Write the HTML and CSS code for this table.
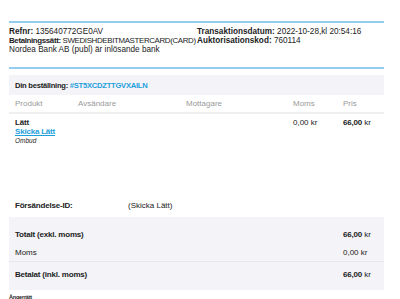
FILE: index.html
```html
<!DOCTYPE html>
<html lang="sv">
<head>
<meta charset="utf-8">
<link rel="stylesheet" href="styles.css">
</head>
<body>
<div class="receipt">
  <div class="info">
    <div class="info-col">
      <div><b>Refnr:</b> 135640772GE0AV</div>
      <div class="tight"><b>Betalningssätt:</b> SWEDISHDEBITMASTERCARD(CARD)</div>
      <div>Nordea Bank AB (publ) är inlösande bank</div>
    </div>
    <div class="info-col">
      <div><b>Transaktionsdatum:</b> 2022-10-28,kl 20:54:16</div>
      <div><b>Auktorisationskod:</b> 760114</div>
    </div>
  </div>
  <div class="order">
    <div class="order-head"><b>Din beställning: <span class="ordno">#ST5XCDZTTGVXAILN</span></b></div>
    <div class="grid cols">
      <div>Produkt</div><div>Avsändare</div><div>Mottagare</div><div>Moms</div><div>Pris</div>
    </div>
    <div class="grid item">
      <div class="prod">
        <b>Lätt</b>
        <a class="link" href="#">Skicka Lätt</a>
        <i class="sub">Ombud</i>
      </div>
      <div></div><div></div><div>0,00 kr</div><div><b>66,00</b> kr</div>
    </div>
    <div class="ship">
      <b class="ship-label">Försändelse-ID:</b><span>(Skicka Lätt)</span>
    </div>
    <div class="totals">
      <div class="trow t1"><b>Totalt (exkl. moms)</b><span><b>66,00</b> kr</span></div>
      <div class="trow t2"><span>Moms</span><span>0,00 kr</span></div>
      <div class="trow t3"><b>Betalat (inkl. moms)</b><span><b>66,00</b> kr</span></div>
    </div>
    <div class="foot"><b>Ångerrätt</b></div>
  </div>
</div>
</body>
</html>
```
FILE: styles.css
```css
html, body { margin: 0; padding: 0; background: #fff; }
body {
  font-family: "Liberation Sans", Arial, Helvetica, sans-serif;
  font-size: 8px;
  color: #222;
}
.receipt {
  width: 375px;
  margin-left: 9px;
  padding-top: 21px;
}
.info {
  border-top: 2px solid #95cdee;
  border-bottom: 2px solid #95cdee;
  display: flex;
  padding: 4px 0 13px 0;
  line-height: 9px;
  font-size: 8.2px;
  white-space: nowrap;
}
.info-col:first-child { width: 188px; }
.tight { font-size: 7.9px; letter-spacing: -0.35px; }
.order { padding-top: 6px; }
.order b { letter-spacing: -0.2px; }
.order-head {
  background: #f4f4f8;
  height: 20px;
  line-height: 22px;
  padding-left: 6px;
  font-size: 7.6px;
}
.order-head b { letter-spacing: -0.25px; }
.ordno { color: #1d9fdc; }
.grid {
  display: grid;
  grid-template-columns: 63px 108px 107px 50px 1fr;
  padding-left: 6px;
}
.cols {
  color: #9a9a9a;
  height: 17px;
  line-height: 17px;
  border-bottom: 2px solid #efeff2;
}
.item { padding-top: 4px; line-height: 9px; height: 84px; }
.prod { display: flex; flex-direction: column; align-items: flex-start; }
.link { color: #1d9fdc; font-weight: bold; text-decoration: underline; letter-spacing: -0.2px; }
.sub { font-size: 6.5px; line-height: 9px; }
.ship {
  display: flex;
  padding-left: 6px;
  height: 15px;
  line-height: 8px;
}
.ship-label { width: 113px; }
.totals {
  background: #f4f4f8;
  padding: 0 0 0 6px;
}
.trow { display: flex; justify-content: space-between; }
.trow span { width: 41px; }
.t1 { padding-top: 13px; line-height: 10px; }
.t2 { line-height: 10px; padding-top: 8px; padding-bottom: 3px; border-bottom: 1px solid #e8e8ec; margin-left: -6px; padding-left: 6px; }
.t3 { line-height: 10px; padding-top: 8px; padding-bottom: 10px; }
.foot { font-size: 5.5px; line-height: 6px; padding-top: 4px; }
```
